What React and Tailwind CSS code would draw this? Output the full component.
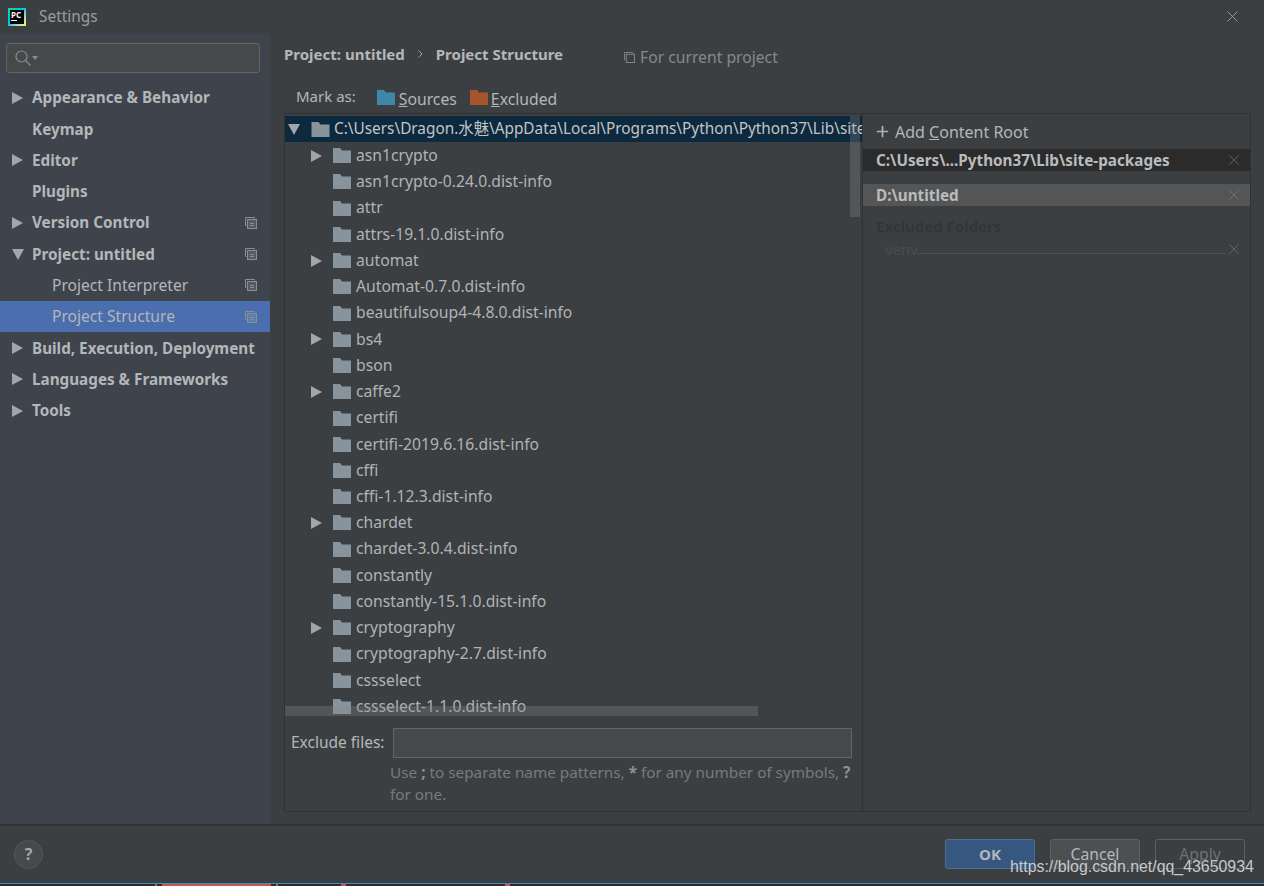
import { Plus, X } from 'lucide-react';

const sideItems = [
  { label: 'Appearance & Behavior', arrow: 'right' },
  { label: 'Keymap' },
  { label: 'Editor', arrow: 'right' },
  { label: 'Plugins' },
  { label: 'Version Control', arrow: 'right', copy: true },
  { label: 'Project: untitled', arrow: 'down', copy: true },
  { label: 'Project Interpreter', child: true, copy: true },
  { label: 'Project Structure', child: true, copy: true, selected: true },
  { label: 'Build, Execution, Deployment', arrow: 'right' },
  { label: 'Languages & Frameworks', arrow: 'right' },
  { label: 'Tools', arrow: 'right' },
];

const treeItems = [
  ['asn1crypto', true],
  ['asn1crypto-0.24.0.dist-info'],
  ['attr'],
  ['attrs-19.1.0.dist-info'],
  ['automat', true],
  ['Automat-0.7.0.dist-info'],
  ['beautifulsoup4-4.8.0.dist-info'],
  ['bs4', true],
  ['bson'],
  ['caffe2', true],
  ['certifi'],
  ['certifi-2019.6.16.dist-info'],
  ['cffi'],
  ['cffi-1.12.3.dist-info'],
  ['chardet', true],
  ['chardet-3.0.4.dist-info'],
  ['constantly'],
  ['constantly-15.1.0.dist-info'],
  ['cryptography', true],
  ['cryptography-2.7.dist-info'],
  ['cssselect'],
  ['cssselect-1.1.0.dist-info'],
];

function Folder({ color = '#87939d', className = 'w-[18px] h-[15px]' }) {
  return (
    <svg viewBox="0 0 18 15" className={`shrink-0 ${className}`}>
      <path d="M0 0h7l2 2.5h9V15H0z" fill={color} />
    </svg>
  );
}

function Arrow({ dir }) {
  if (dir === 'down') {
    return (
      <svg viewBox="0 0 12 11" className="w-3 h-[11px] shrink-0">
        <path d="M0 0h12L6 11z" fill="#a3a6a8" />
      </svg>
    );
  }
  return (
    <svg viewBox="0 0 11 12" className="w-[11px] h-3 shrink-0">
      <path d="M0 0l11 6-11 6z" fill="#a3a6a8" />
    </svg>
  );
}

function CopyIcon() {
  return (
    <svg viewBox="0 0 12 12" className="w-3 h-3 shrink-0" fill="none" stroke="#8a8f93" strokeWidth="1">
      <path d="M9.5 1.5V.5H.5v8h1" />
      <rect x="2.5" y="2.5" width="9" height="9" fill="#a0a4a8" fillOpacity="0.25" />
      <path d="M5 6.5h4M5 8.5h4" />
    </svg>
  );
}

function SideRow({ item }) {
  return (
    <div className={`relative h-[31.3px] flex items-center ${item.selected ? 'bg-[#4b6eaf]' : ''}`}>
      <div className="w-8 pl-3 shrink-0 flex">{item.arrow && <Arrow dir={item.arrow} />}</div>
      <span className={item.child ? 'ml-5 text-[15.6px] text-[#b4b7b9]' : 'font-bold text-[15.25px] text-[#b4b7b9]'}>{item.label}</span>
      {item.copy && (
        <div className="ml-auto mr-[13px]">
          <CopyIcon />
        </div>
      )}
    </div>
  );
}

function TreeRow({ name, hasArrow }) {
  return (
    <div className="h-[26.24px] flex items-center shrink-0 text-[15.7px] text-[#b0b3b5] whitespace-nowrap">
      <div className="w-[48px] pl-[26px] shrink-0 flex">{hasArrow && <Arrow dir="right" />}</div>
      <Folder />
      <span className="ml-[5px]">{name}</span>
    </div>
  );
}

function RootRow({ name, selected, dim }) {
  return (
    <div className={`h-[22px] flex items-center pl-[13px] pr-[7px] ${selected ? 'bg-[#2b2b2b]' : 'bg-[#555555]'}`}>
      <span className="font-bold text-[15.25px] text-[#b9bcbe] flex-1 truncate">{name}</span>
      <X size={18} strokeWidth={1} color={dim} />
    </div>
  );
}

export default function App() {
  return (
    <div
      className="relative w-[1264px] h-[886px] overflow-hidden flex flex-col bg-[#3c3f41] text-[15px] text-[#b4b7b9]"
      style={{ fontFamily: "'Noto Sans', 'Noto Sans CJK SC', sans-serif" }}
    >
      {/* title bar */}
      <div className="h-[33px] shrink-0 flex items-center pl-2 pr-[22px]">
        <div className="w-[18px] h-[18px] bg-gradient-to-br from-[#21d789] via-[#07c3f2] to-[#fcf84a] p-[2px]">
          <div className="w-full h-full bg-black text-white text-[8px] font-bold leading-[9px] pl-[1px]">
            PC
            <div className="mt-[1px] w-[6px] h-[1px] bg-white" />
          </div>
        </div>
        <span className="ml-[13px] text-[15.4px] text-[#9a9da0]">Settings</span>
        <X size={19} strokeWidth={1.1} color="#a0a3a5" className="ml-auto" />
      </div>

      <div className="flex-1 flex min-h-0">
        {/* sidebar */}
        <aside className="w-[270px] shrink-0 bg-[#3e434c]">
          <div className="ml-[6px] mr-[10px] mt-[10px] h-[30px] rounded-[3px] border border-[#646464] bg-[#45494a] flex items-center pl-2">
            <svg viewBox="0 0 16 16" className="w-4 h-4" fill="none" stroke="#8a8d8f" strokeWidth="1.2">
              <circle cx="6.5" cy="6.5" r="5.5" />
              <path d="M10.5 10.5L15.5 15.5" />
            </svg>
            <svg viewBox="0 0 6 4" className="w-[6px] h-1 ml-[1px]">
              <path d="M0 0h6L3 4z" fill="#8a8d8f" />
            </svg>
          </div>
          <div className="mt-[9px]">
            {sideItems.map((item) => (
              <SideRow key={item.label} item={item} />
            ))}
          </div>
        </aside>

        {/* main panel */}
        <main className="flex-1 min-w-0 flex flex-col pl-[14px] pr-[13px] pb-3">
          <div className="h-[44px] shrink-0 pt-[10px]">
            <div className="flex items-center h-[22px]">
              <span className="font-bold text-[#b4b7b9]">Project: untitled</span>
              <svg viewBox="0 0 5 8" className="w-[5px] h-2 mx-[13px]" fill="none" stroke="#a0a3a5">
                <path d="M.5.5L4 4 .5 7.5" />
              </svg>
              <span className="font-bold text-[#b4b7b9]">Project Structure</span>
              <span className="ml-[61px] mt-[7px] flex items-center gap-[5px] text-[15.7px] text-[#85888a]">
                <svg viewBox="0 0 12 12" className="w-[11px] h-[11px]" fill="none" stroke="#85888a">
                  <path d="M9.5 1.5V.5H.5v8h1" />
                  <rect x="2.5" y="2.5" width="9" height="9" />
                </svg>
                For current project
              </span>
            </div>
          </div>

          <div className="h-[36px] shrink-0 flex items-center pl-3 pt-[4px]">
            <span className="-mt-[1px]">Mark as:</span>
            <span className="ml-[21px] flex items-center text-[15.75px]">
              <Folder color="#3e87a8" />
              <span className="ml-1 mt-[5px]"><u>S</u>ources</span>
            </span>
            <span className="ml-[13px] flex items-center text-[15.75px]">
              <Folder color="#a6542b" />
              <span className="ml-[3px] mt-[5px]"><u>E</u>xcluded</span>
            </span>
          </div>

          <div className="flex-1 min-h-0 flex border border-[#323232]">
            {/* tree column */}
            <div className="relative w-[578px] shrink-0 flex flex-col border-r border-[#323232]">
              <div className="h-[603px] overflow-hidden flex flex-col shrink-0 pt-[2px]">
                <div className="h-[26px] mb-[0.6px] shrink-0 flex items-center pl-[3px] bg-[#0d293e] whitespace-nowrap overflow-hidden text-[15.35px] text-[#c2c5c7]">
                  <Arrow dir="down" />
                  <span className="ml-[11px] flex"><Folder className="w-[19px] h-[15px]" /></span>
                  <span className="ml-[4px]">C:\Users\Dragon.水魅\AppData\Local\Programs\Python\Python37\Lib\site-packages</span>
                </div>
                {treeItems.map(([name, hasArrow]) => (
                  <TreeRow key={name} name={name} hasArrow={hasArrow} />
                ))}
              </div>
              {/* scrollbars */}
              <div className="absolute right-[2px] top-[2px] w-[10px] h-[101px] bg-[#8a8a8a]/30" />
              <div className="absolute left-0 top-[592px] h-[10px] w-[473px] bg-[#8a8a8a]/30" />

              <div className="flex items-center h-[30px] mt-[11px] pl-[6px] pr-[10px] shrink-0">
                <span className="text-[15.5px] text-[#b4b7b9] mr-[9px]">Exclude files:</span>
                <div className="flex-1 h-[30px] border border-[#646464] bg-[#45494a]" />
              </div>
              <div className="pl-[105px] pr-2 mt-[3px] text-[15.3px] text-[#787a7c] leading-[22px]">
                Use <b className="text-[#8f9294]">;</b> to separate name patterns, <b className="text-[#8f9294]">*</b> for any number of symbols, <b className="text-[#8f9294]">?</b> for one.
              </div>
            </div>

            {/* content roots */}
            <div className="flex-1 min-w-0">
              <div className="h-[35px] flex items-center pl-[11px] text-[16px] text-[#b4b7b9]">
                <Plus size={17} strokeWidth={2.4} color="#b0b3b5" />
                <span className="ml-[4px]">Add <u>C</u>ontent Root</span>
              </div>
              <RootRow name="C:\Users\...Python37\Lib\site-packages" selected dim="#6f7274" />
              <div className="h-[13px]" />
              <RootRow name="D:\untitled" dim="#75787a" />
              <div className="pl-[13px] mt-[9px] font-bold text-[#323537] leading-[22px]">Excluded Folders</div>
              <div className="flex items-center pl-[22px] pr-[7px] h-[24px]">
                <span className="text-[#4a4d4f]">venv</span>
                <div className="flex-1 border-b border-dotted border-[#5c5f61] mt-[8px]" />
                <X size={18} strokeWidth={1} color="#6f7274" />
              </div>
            </div>
          </div>
        </main>
      </div>

      {/* footer */}
      <div className="h-[59px] shrink-0 border-t-2 border-[#323232] flex items-center pl-[14px] pr-[19px] pb-[1px]">
        <div className="w-[29px] h-[29px] rounded-full border border-[#56595b] bg-[#45494a] flex items-center justify-center font-bold text-[#a5a8aa] text-[16px]">?</div>
        <div className="ml-auto flex gap-[15px]">
          <div className="w-[90px] h-[30px] rounded-[3px] border border-[#4c708c] bg-[#365880] flex items-center justify-center font-bold text-[#b4b7b9]">OK</div>
          <div className="w-[90px] h-[30px] rounded-[3px] border border-[#5e6060] bg-[#4c5052] flex items-center justify-center pt-[2px] text-[15.7px] text-[#b4b7b9]">Cancel</div>
          <div className="w-[90px] h-[30px] rounded-[3px] border border-[#5e6060] flex items-center justify-center pt-[2px] text-[15.7px] text-[#6e7072]">Apply</div>
        </div>
      </div>

      {/* window edge and what shows behind it */}
      <div className="h-[3px] shrink-0 border-t border-[#3592c4] bg-[#2b2b2b] flex">
        <div className="ml-[155px] w-[2px] bg-[#c75450]" />
        <div className="ml-[5px] w-[109px] bg-[#c75450]" />
        <div className="ml-[5px] w-[2px] bg-[#c75450]" />
        <div className="ml-[63px] w-[5px] bg-[#c75450]" />
        <div className="ml-[159px] w-[5px] bg-[#c75450]" />
      </div>

      {/* watermark */}
      <div
        className="absolute left-[1010px] top-[855px] text-[15.9px] text-[#c8cacb] whitespace-nowrap"
        style={{ fontFamily: "'Liberation Sans', sans-serif" }}
      >
        https://blog.csdn.net/qq_43650934
      </div>
    </div>
  );
}
